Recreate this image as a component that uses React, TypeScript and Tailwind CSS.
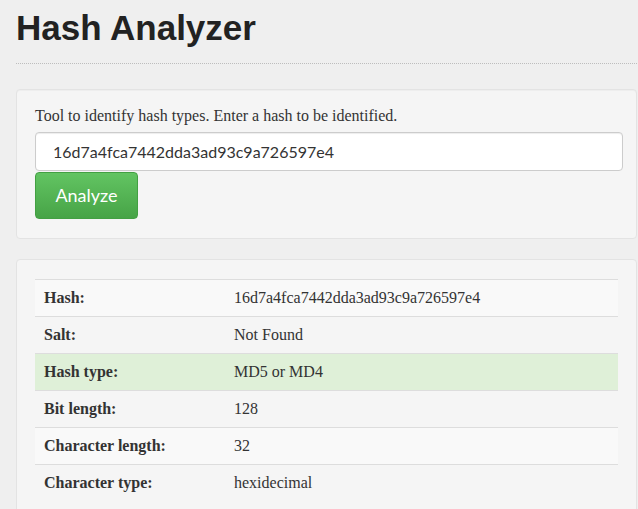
const rows = [
  { label: 'Hash:', value: '16d7a4fca7442dda3ad93c9a726597e4', bg: 'bg-[#f9f9f9]' },
  { label: 'Salt:', value: 'Not Found', bg: '' },
  { label: 'Hash type:', value: 'MD5 or MD4', bg: 'bg-[#dff0d8]' },
  { label: 'Bit length:', value: '128', bg: '' },
  { label: 'Character length:', value: '32', bg: 'bg-[#f9f9f9]' },
  { label: 'Character type:', value: 'hexidecimal', bg: '' },
]

export default function App() {
  return (
    <div className="min-h-screen bg-[#efefef] pl-4 pr-[1px] pt-[8px] text-[#333]">
      <div className="border-b border-dotted border-[#bdbdbd] pb-[16px]">
        <h1 className="font-['Liberation_Sans',Arial,sans-serif] text-[35px] font-bold leading-[39px] text-[#222]">
          Hash Analyzer
        </h1>
      </div>

      <div className="mt-[25px] rounded-[4px] border border-[#e3e3e3] bg-[#f5f5f5] pb-[19px] pl-[18px] pr-[13px] pt-[15px] shadow-[inset_0_1px_1px_rgba(0,0,0,0.03)]">
        <p className="font-['Liberation_Serif','Times_New_Roman',serif] text-[16px] leading-[22px]">
          Tool to identify hash types. Enter a hash to be identified.
        </p>
        <input
          readOnly
          value="16d7a4fca7442dda3ad93c9a726597e4"
          className="mt-[5px] block h-[39px] w-full rounded-[4px] border border-[#cccccc] bg-white pl-[17px] font-['Lato',sans-serif] text-[16px] text-[#333] shadow-[inset_0_1px_1px_rgba(0,0,0,0.075)] outline-none"
        />
        <button className="mt-[1px] flex h-[47px] w-[103px] items-center justify-center rounded-[4px] border border-[#43a043] bg-gradient-to-b from-[#62c462] to-[#47a447] font-['Lato',sans-serif] text-[18px] text-white">
          Analyze
        </button>
      </div>

      <div className="mt-[20px] rounded-[4px] border border-[#e3e3e3] bg-[#f5f5f5] px-[18px] pb-[19px] pt-[19px]">
        <table className="w-full border-collapse font-['Liberation_Serif','Times_New_Roman',serif] text-[16px] leading-[22px]">
          <tbody>
            {rows.map((row) => (
              <tr key={row.label} className={`border-t border-[#dddddd] ${row.bg}`}>
                <th className="w-[190px] py-[7px] pl-[9px] text-left font-bold">{row.label}</th>
                <td className="py-[7px] pl-[9px]">{row.value}</td>
              </tr>
            ))}
          </tbody>
        </table>
      </div>
    </div>
  )
}
